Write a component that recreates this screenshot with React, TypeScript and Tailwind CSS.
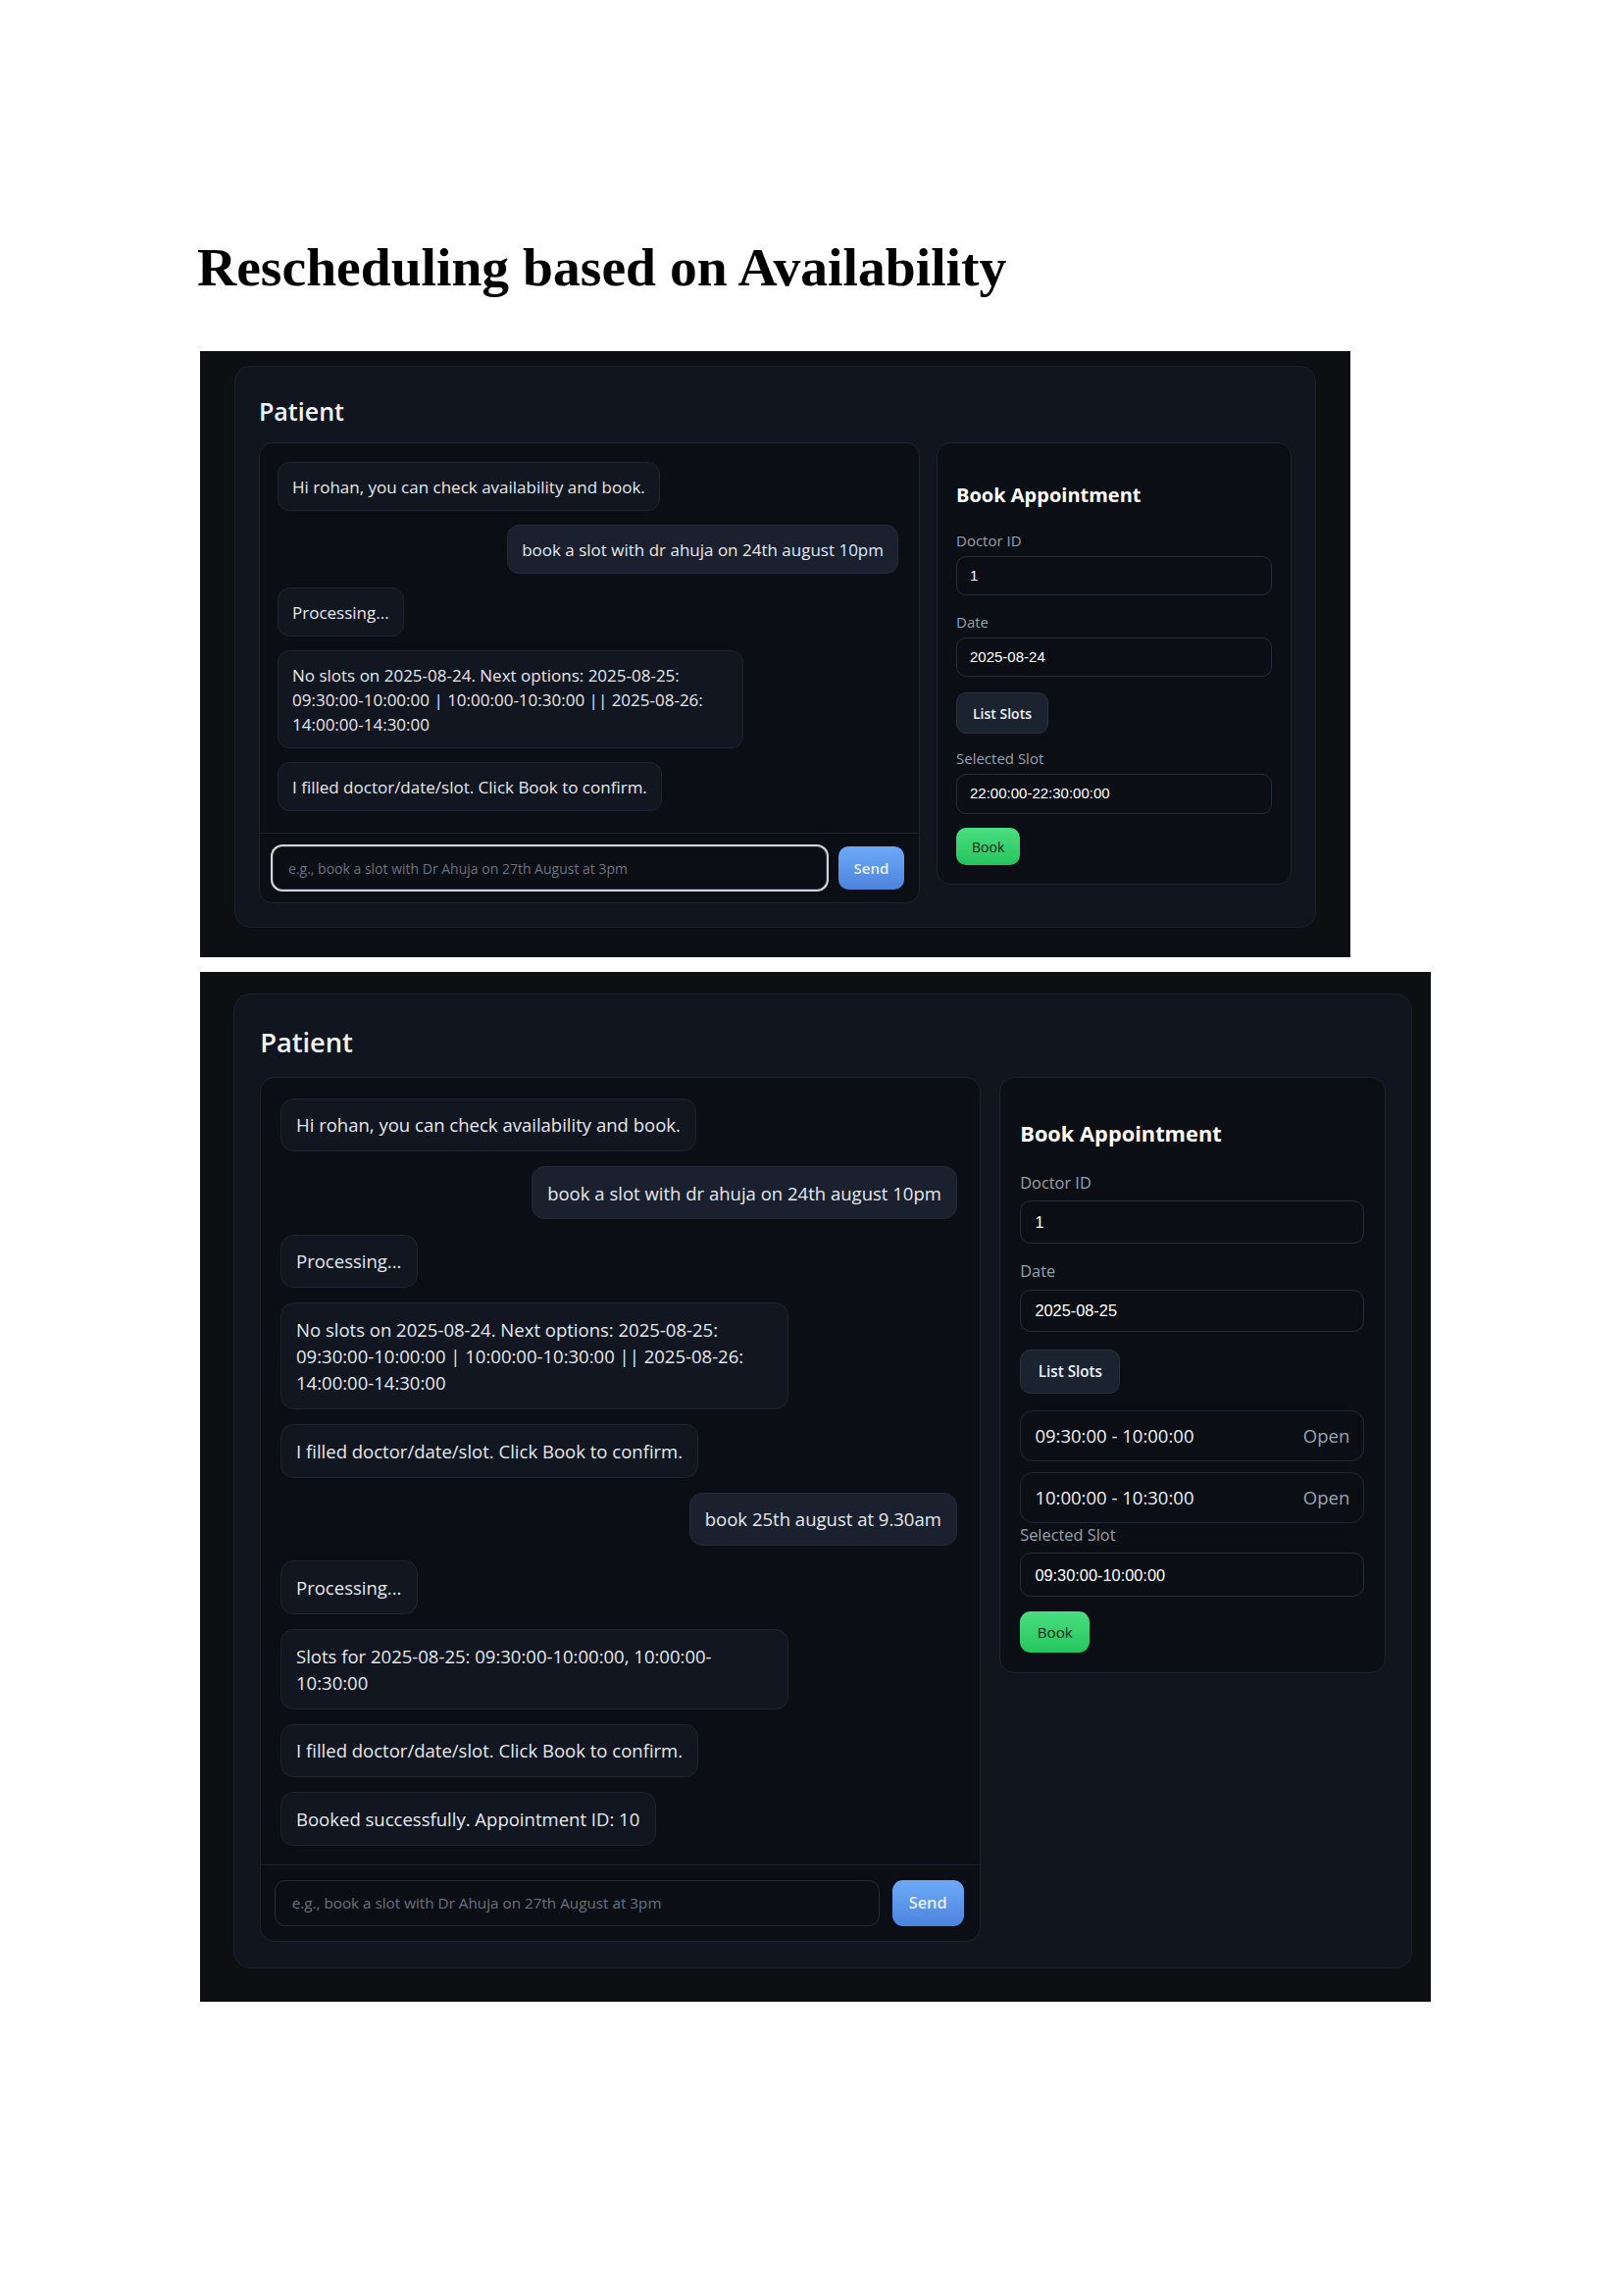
import React from 'react';

type Msg = { from: 'bot' | 'user'; text: string };
type Slot = { start: string; end: string };

const firstChat: Msg[] = [
  { from: 'bot', text: 'Hi rohan, you can check availability and book.' },
  { from: 'user', text: 'book a slot with dr ahuja on 24th august 10pm' },
  { from: 'bot', text: 'Processing...' },
  {
    from: 'bot',
    text: 'No slots on 2025-08-24. Next options: 2025-08-25: 09:30:00-10:00:00 | 10:00:00-10:30:00 || 2025-08-26: 14:00:00-14:30:00',
  },
  { from: 'bot', text: 'I filled doctor/date/slot. Click Book to confirm.' },
];

const secondChat: Msg[] = [
  ...firstChat,
  { from: 'user', text: 'book 25th august at 9.30am' },
  { from: 'bot', text: 'Processing...' },
  { from: 'bot', text: 'Slots for 2025-08-25: 09:30:00-10:00:00, 10:00:00-10:30:00' },
  { from: 'bot', text: 'I filled doctor/date/slot. Click Book to confirm.' },
  { from: 'bot', text: 'Booked successfully. Appointment ID: 10' },
];

const openSlots: Slot[] = [
  { start: '09:30:00', end: '10:00:00' },
  { start: '10:00:00', end: '10:30:00' },
];

function Bubble({ msg }: { msg: Msg }) {
  const isUser = msg.from === 'user';
  return (
    <div
      className={
        isUser
          ? 'self-end max-w-[75%] rounded-xl border border-[#232a3a] bg-[#1a202e] px-[14px] py-[11.5px] text-[17px] leading-[25px] text-[#e6e8ec]'
          : 'self-start max-w-[75%] rounded-xl border border-[#1e2431] bg-[#111620] px-[14px] py-[11.5px] text-[17px] leading-[25px] text-[#e6e8ec]'
      }
    >
      {msg.text}
    </div>
  );
}

function ChatPanel({ messages, focused }: { messages: Msg[]; focused?: boolean }) {
  return (
    <div className="flex flex-col rounded-[14px] border border-[#1d2330] bg-[#0b0e14]">
      <div className="flex min-h-[397px] flex-col gap-[14px] pt-[19px] pr-[21px] pb-[18px] pl-[18px]">
        {messages.map((m, i) => (
          <Bubble key={i} msg={m} />
        ))}
      </div>
      <div className="flex gap-3 border-t border-[#1d2330] py-[13px] pr-[15px] pl-[13px]">
        <input
          readOnly
          placeholder="e.g., book a slot with Dr Ahuja on 27th August at 3pm"
          className={
            focused
              ? 'h-11 flex-1 rounded-[10px] border border-[#2a3140] bg-[#0b0e14] px-[15px] text-[14px] text-white outline-none ring-2 ring-[#d4d4d4] placeholder:text-[#6b7280]'
              : 'h-11 flex-1 rounded-[10px] border border-[#252c3a] bg-[#0b0e14] px-[15px] text-[14px] text-white outline-none placeholder:text-[#6b7280]'
          }
        />
        <button className="h-11 w-[67px] rounded-[10px] bg-gradient-to-b from-[#6eaaf8] to-[#4c84dd] text-[15px] font-semibold text-[#e8f0ff]">
          Send
        </button>
      </div>
    </div>
  );
}

function Label({ children, className = '' }: { children: React.ReactNode; className?: string }) {
  return <div className={`mb-1.5 text-[15px] leading-5 text-[#98a1ae] ${className}`}>{children}</div>;
}

function ValueBox({ value, tall }: { value: string; tall?: boolean }) {
  return (
    <div
      className={
        tall
          ? "flex h-[41px] items-center rounded-[10px] border border-[#262d3b] px-[13px] font-['Liberation_Sans',Arial,sans-serif] text-[15px] text-white"
          : "flex h-10 items-center rounded-[10px] border border-[#262d3b] px-[13px] font-['Liberation_Sans',Arial,sans-serif] text-[15px] text-white"
      }
    >
      {value}
    </div>
  );
}

function BookingPanel({ date, slot, slots }: { date: string; slot: string; slots?: Slot[] }) {
  return (
    <div className="rounded-[14px] border border-[#1d2330] bg-[#0b0e14] px-[19px] pt-[39px] pb-[19px]">
      <h3 className="mb-[22px] text-[20px] leading-7 font-bold text-white">Book Appointment</h3>

      <Label>Doctor ID</Label>
      <ValueBox value="1" />

      <Label className="mt-[17px]">Date</Label>
      <ValueBox value={date} />

      <button className="mt-4 h-[42px] rounded-[10px] border border-[#2a3242] bg-[#1b2230] px-4 text-[14px] font-semibold text-[#eef1f6]">
        List Slots
      </button>

      {slots && (
        <div className="mt-[15px] flex flex-col gap-2.5">
          {slots.map((s) => (
            <div
              key={s.start}
              className="flex items-center justify-between rounded-xl border border-[#1f2633] px-[13px] py-[11px] text-[17px] leading-6"
            >
              <span className="text-[#eef0f4]">
                {s.start} - {s.end}
              </span>
              <span className="text-[#9ca3af]">Open</span>
            </div>
          ))}
        </div>
      )}

      <Label className={slots ? 'mt-[2px]' : 'mt-[15px]'}>Selected Slot</Label>
      <ValueBox value={slot} tall />

      <button className="mt-[14px] h-[38px] rounded-[10px] bg-gradient-to-b from-[#4ade80] to-[#22c55e] px-4 text-[14px] font-medium text-[#0f2417]">
        Book
      </button>
    </div>
  );
}

function PatientCard({
  messages,
  focused,
  date,
  slot,
  slots,
}: {
  messages: Msg[];
  focused?: boolean;
  date: string;
  slot: string;
  slots?: Slot[];
}) {
  return (
    <div className="w-[1103px] rounded-2xl border border-[#1c2130] bg-[#111520] px-6 pt-[27px] pb-6">
      <h2 className="mb-[14px] text-[25px] leading-9 font-semibold text-[#f3f4f6]">Patient</h2>
      <div className="grid grid-cols-[1fr_362px] items-start gap-[17px]">
        <ChatPanel messages={messages} focused={focused} />
        <BookingPanel date={date} slot={slot} slots={slots} />
      </div>
    </div>
  );
}

export default function App() {
  return (
    <div className="min-h-[2339px] w-[1656px] bg-white pt-[245px] pl-[201px] font-['Open_Sans','Noto_Sans',sans-serif]">
      <h1 className="h-[58px] font-['Liberation_Serif','Times_New_Roman',serif] text-[55.6px] leading-none font-bold text-black">
        Rescheduling based on Availability
      </h1>

      <div className="mt-[55px] ml-[3px] h-[618px] w-[1173px] bg-[#0d0f13] pt-[15px] pl-[35px]">
        <PatientCard messages={firstChat} focused date="2025-08-24" slot="22:00:00-22:30:00:00" />
      </div>

      <div className="mt-[15px] ml-[3px] h-[1050px] w-[1255px] bg-[#0d0f13] pt-[22px] pl-[34px]">
        <div className="[zoom:1.09]">
          <PatientCard messages={secondChat} date="2025-08-25" slot="09:30:00-10:00:00" slots={openSlots} />
        </div>
      </div>
    </div>
  );
}
